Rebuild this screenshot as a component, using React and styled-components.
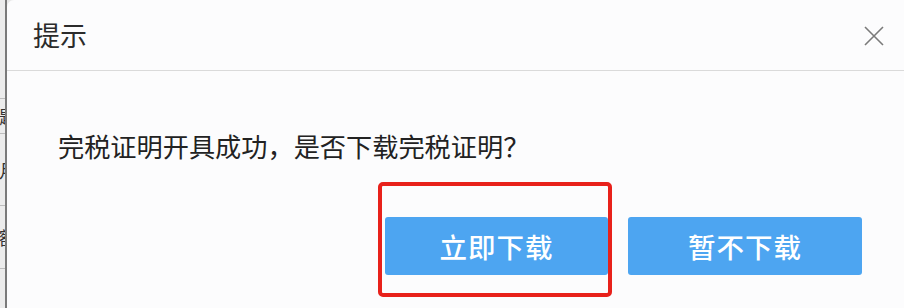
import React from "react";
import styled, { createGlobalStyle } from "styled-components";

const Global = createGlobalStyle`
  html, body { margin: 0; padding: 0; }
  body {
    width: 904px;
    height: 308px;
    overflow: hidden;
    background: #e9e9e9;
    font-family: "Noto Sans CJK SC", "Noto Sans", sans-serif;
  }
`;

const Page = styled.div`
  display: flex;
  width: 904px;
  height: 308px;
`;

const BackStrip = styled.div`
  width: 5px;
  flex: none;
  display: flex;
  flex-direction: column;
  overflow: hidden;
  background: #ececec;
  border-right: 2px solid #7a7a7a;
  padding-top: 98px;
`;

const BackCell = styled.div`
  height: ${(p) => p.$h}px;
  flex: none;
  border-top: 1px solid #bdbdbd;
  display: flex;
  justify-content: flex-end;
  align-items: center;
  font-size: 18px;
  color: #333;
  white-space: nowrap;
`;

const BackGlyph = styled.span`
  margin-right: -12px;
`;

const Dialog = styled.div`
  flex: 1;
  background: #fcfcfd;
  border-top-left-radius: 7px;
  display: flex;
  flex-direction: column;
`;

const Header = styled.div`
  height: 71px;
  flex: none;
  box-sizing: border-box;
  border-bottom: 1px solid #dadada;
  display: flex;
  align-items: center;
  justify-content: space-between;
  padding: 0 19px 0 26px;
`;

const Title = styled.div`
  font-size: 27px;
  color: #2b2b2b;
  line-height: 1;
  margin-top: -2px;
`;

const Close = styled.button`
  width: 22px;
  height: 22px;
  padding: 0;
  border: none;
  background: none;
  display: flex;
  align-items: center;
  justify-content: center;
  margin-top: 2px;
`;

const Body = styled.div`
  flex: 1;
  display: flex;
  flex-direction: column;
  padding: 57px 0 0 51px;
`;

const Message = styled.div`
  font-size: 26.2px;
  color: #222;
  line-height: 36px;
  letter-spacing: 0;
`;

const Actions = styled.div`
  display: flex;
  justify-content: flex-end;
  gap: 20px;
  padding-right: 42px;
  margin-top: 53px;
`;

const Highlight = styled.div`
  position: relative;
  display: flex;
`;

const Mark = styled.div`
  position: absolute;
  left: -7px;
  right: -4px;
  top: -35px;
  bottom: -22px;
  border: 4px solid #e8211b;
  border-radius: 5px;
  pointer-events: none;
`;

const Button = styled.button`
  width: ${(p) => p.$w}px;
  height: 58px;
  border: none;
  border-radius: 3px;
  background: #4da5f1;
  color: #fff;
  font-family: "Noto Sans CJK SC", "Noto Sans", sans-serif;
  font-size: 27.5px;
  font-weight: 500;
  letter-spacing: 1px;
  padding: 0;
  display: flex;
  align-items: center;
  justify-content: center;
`;

export default function App() {
  return (
    <>
      <Global />
      <Page>
        <BackStrip>
          <BackCell $h={34}><BackGlyph>题</BackGlyph></BackCell>
          <BackCell $h={71}><BackGlyph>月</BackGlyph></BackCell>
          <BackCell $h={62}><BackGlyph>额</BackGlyph></BackCell>
          <BackCell $h={60}></BackCell>
        </BackStrip>
        <Dialog>
          <Header>
            <Title>提示</Title>
            <Close aria-label="关闭">
              <svg width="20" height="20" viewBox="0 0 20 20">
                <path d="M1 1 L19 19 M19 1 L1 19" stroke="#7a7a7a" strokeWidth="1.6" fill="none" />
              </svg>
            </Close>
          </Header>
          <Body>
            <Message>完税证明开具成功，是否下载完税证明？</Message>
            <Actions>
              <Highlight>
                <Button $w={223}>立即下载</Button>
                <Mark />
              </Highlight>
              <Button $w={234}>暂不下载</Button>
            </Actions>
          </Body>
        </Dialog>
      </Page>
    </>
  );
}
